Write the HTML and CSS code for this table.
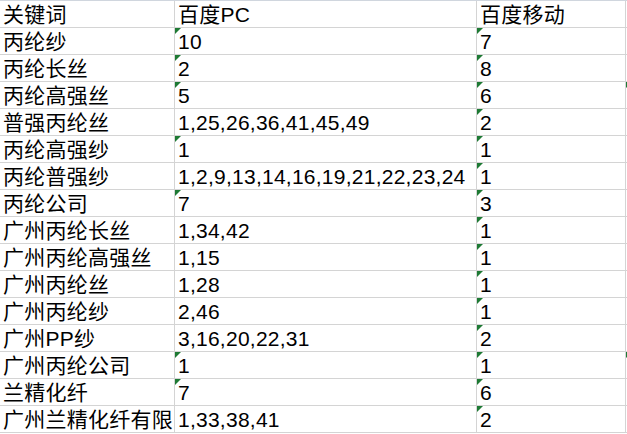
FILE: index.html
```html
<!DOCTYPE html>
<html lang="zh-CN">
<head>
<meta charset="utf-8">
<title>关键词排名</title>
<link rel="stylesheet" href="styles.css">
</head>
<body>
<div class="sheet">
  <div class="cell">关键词</div><div class="cell">百度PC</div><div class="cell">百度移动</div><div class="cell edge"></div>
  <div class="cell">丙纶纱</div><div class="cell txt">10</div><div class="cell txt">7</div><div class="cell edge"></div>
  <div class="cell">丙纶长丝</div><div class="cell txt">2</div><div class="cell txt">8</div><div class="cell edge"></div>
  <div class="cell">丙纶高强丝</div><div class="cell txt">5</div><div class="cell txt">6</div><div class="cell edge txt"></div>
  <div class="cell">普强丙纶丝</div><div class="cell">1,25,26,36,41,45,49</div><div class="cell txt">2</div><div class="cell edge"></div>
  <div class="cell">丙纶高强纱</div><div class="cell txt">1</div><div class="cell txt">1</div><div class="cell edge"></div>
  <div class="cell">丙纶普强纱</div><div class="cell">1,2,9,13,14,16,19,21,22,23,24</div><div class="cell txt">1</div><div class="cell edge"></div>
  <div class="cell">丙纶公司</div><div class="cell txt">7</div><div class="cell txt">3</div><div class="cell edge"></div>
  <div class="cell">广州丙纶长丝</div><div class="cell">1,34,42</div><div class="cell txt">1</div><div class="cell edge"></div>
  <div class="cell">广州丙纶高强丝</div><div class="cell">1,15</div><div class="cell txt">1</div><div class="cell edge"></div>
  <div class="cell">广州丙纶丝</div><div class="cell">1,28</div><div class="cell txt">1</div><div class="cell edge"></div>
  <div class="cell">广州丙纶纱</div><div class="cell">2,46</div><div class="cell txt">1</div><div class="cell edge"></div>
  <div class="cell">广州PP纱</div><div class="cell">3,16,20,22,31</div><div class="cell txt">2</div><div class="cell edge"></div>
  <div class="cell">广州丙纶公司</div><div class="cell txt">1</div><div class="cell txt">1</div><div class="cell edge txt"></div>
  <div class="cell">兰精化纤</div><div class="cell txt">7</div><div class="cell txt">6</div><div class="cell edge"></div>
  <div class="cell">广州兰精化纤有限</div><div class="cell">1,33,38,41</div><div class="cell txt">2</div><div class="cell edge"></div>
</div>
</body>
</html>
```

FILE: styles.css
```css
html, body {
  margin: 0;
  padding: 0;
  background: #ffffff;
}

.sheet {
  display: grid;
  grid-template-columns: 175px 302px 149px 1fr;
  grid-auto-rows: 27px;
  border-top: 1px solid #d0d6de;
  font-family: "Liberation Sans", "Noto Sans CJK SC", sans-serif;
  font-size: 21px;
  letter-spacing: 0.25px;
  color: #000000;
  width: 627px;
}

.cell {
  position: relative;
  box-sizing: border-box;
  height: 27px;
  line-height: 27px;
  padding-left: 3px;
  border-right: 1px solid #d4d4d4;
  border-bottom: 1px solid #d4d4d4;
  white-space: nowrap;
  overflow: hidden;
}

.edge {
  border-right: none;
  padding: 0;
}

.txt::before {
  content: "";
  position: absolute;
  top: 0;
  left: 0;
  width: 0;
  height: 0;
  border-top: 6px solid #1e7a34;
  border-right: 6px solid transparent;
}
```
